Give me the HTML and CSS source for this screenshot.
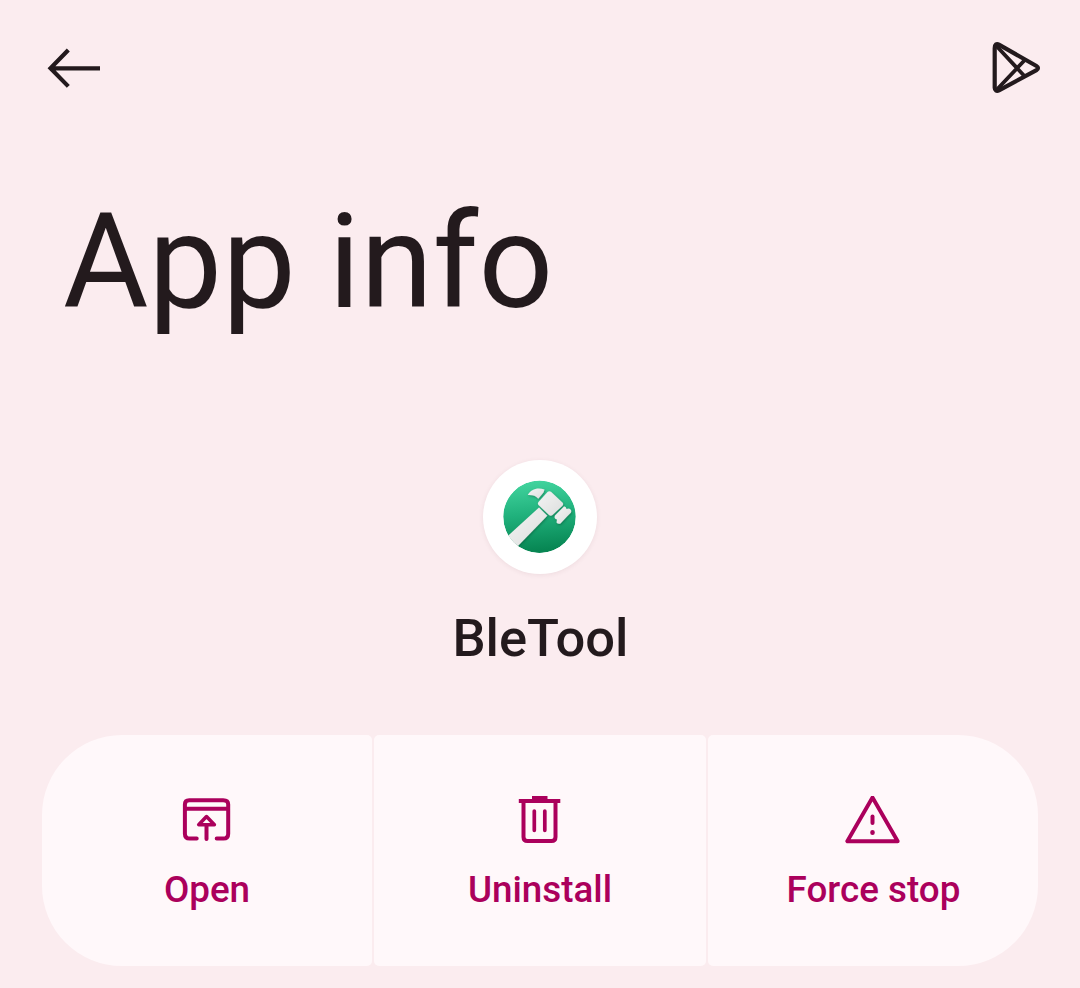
FILE: index.html
```html
<!DOCTYPE html>
<html lang="en">
<head>
<meta charset="utf-8">
<title>App info</title>
<link rel="stylesheet" href="styles.css">
</head>
<body>
<main class="screen">
  <header class="toolbar">
    <svg class="back" width="54" height="42" viewBox="0 0 54 42"><path d="M21.3 3 3.5 21.200 21.3 39.400M3.5 21.4H53" fill="none" stroke="currentColor" stroke-width="4.200"/></svg>
    <svg class="store" width="52" height="56" viewBox="0 0 52 56" fill="none" stroke="currentColor" stroke-width="4.200" stroke-linejoin="round"><path d="M3.700 8.200v39.600c0 2.600 1.900 3.900 4.200 2.600L45.500 30.200c2-1.100 2-3.100 0-4.200L7.900 4.600C5.600 3.300 3.700 4.500 3.700 8.200Z"/><path d="M5 5.500 34.300 37M5 50.500 34.300 19.500" stroke-width="3.800"/></svg>
  </header>
  <h1 class="title">App info</h1>
  <section class="app">
    <div class="app-icon">
      <svg width="74" height="74" viewBox="0 0 74 74">
        <defs>
          <linearGradient id="green" x1="0" y1="0" x2=".1" y2="1"><stop offset="0" stop-color="#45d7a1"/><stop offset=".5" stop-color="#20b17c"/><stop offset="1" stop-color="#078653"/></linearGradient>
          <linearGradient id="metal" x1="0" y1="0" x2="1" y2="1"><stop offset="0" stop-color="#f4f4f4"/><stop offset="1" stop-color="#dcdedd"/></linearGradient>
          <clipPath id="disc"><circle cx="36.500" cy="36.800" r="36.300"/></clipPath>
          <filter id="shade" x="-20%" y="-20%" width="150%" height="150%"><feDropShadow dx=".8" dy="1.200" stdDeviation=".8" flood-color="#064d31" flood-opacity=".5"/></filter>
        </defs>
        <g clip-path="url(#disc)">
          <circle cx="36.500" cy="36.800" r="36.300" fill="url(#green)"/>
          <g fill="url(#metal)" filter="url(#shade)">
            <path d="M36 27.500 44.300 35.800 13 68 2 58.500Z"/>
            <path d="M24.800 15C28 9 34.500 7 41.500 9.500L40.500 12.500 35.300 18.800C32.500 15.600 29.500 14.700 24.800 15Z"/>
            <path d="M44.500 12Q46 10.500 48 11.700L59.700 22.800Q60.700 24.200 59.500 25.700L49.500 35Q47.700 36.500 46 35L35.500 25Q34.300 23.500 35.500 22Z"/>
            <path d="M61 26.500Q63 26 63.500 29L66 28.500Q69 29.500 68 32.500L64.500 36 57.500 43.500Q55 44.500 53.500 42.500L54 39.500Q50.500 38.500 52 35.500Z"/>
          </g>
        </g>
      </svg>
    </div>
    <h2 class="app-name">BleTool</h2>
  </section>
  <nav class="actions">
    <button class="action">
      <svg width="56" height="52" viewBox="0 0 56 52" fill="none" stroke="currentColor" stroke-width="4" stroke-linecap="round"><path d="M17.700 42.500H10.700Q5.900 42.500 5.900 37.700V8.500Q5.900 4.200 10.200 4.200H44.200Q49.200 4.200 49.200 8.500V37.700Q49.200 42.500 44.400 42.500H37.700M6.200 12.800H49.200M27.500 43V29"/><path d="M27.500 20.500 19.700 28.800H35.400Z" stroke-linejoin="round" stroke-width="3.500"/></svg>
      <span>Open</span>
    </button>
    <button class="action">
      <svg width="56" height="52" viewBox="0 0 56 52" fill="none" stroke="currentColor" stroke-width="4"><path d="M6.800 5H48.300M20 2H35.500"/><path d="M11.500 5V41Q11.500 45 15.500 45H39.500Q43.500 45 43.500 41V5"/><path d="M22.300 15V34.300M32.800 15V34.300" stroke-linecap="round" stroke-width="3.700"/></svg>
      <span>Uninstall</span>
    </button>
    <button class="action">
      <svg width="56" height="52" viewBox="0 0 56 52" fill="none" stroke="currentColor" stroke-width="3.900" stroke-linecap="round" stroke-linejoin="round"><path d="M27.500 1.500 2.300 45.200H52.700Z"/><path d="M27.500 20.500V27" stroke-width="4"/><path d="M27.500 36.200V36.700" stroke-width="4.500"/></svg>
      <span>Force stop</span>
    </button>
  </nav>
</main>
</body>
</html>
```
FILE: styles.css
```css
* { box-sizing: border-box; }
body { margin: 0; background: #fbecef; color: #231a1d; font-family: Roboto, sans-serif; }
.screen { width: 1080px; height: 988px; padding: 0 42px; overflow: hidden; }
.toolbar { display: flex; justify-content: space-between; height: 136px; padding: 40px 0 0 5px; }
.toolbar svg { display: block; }
.back { margin-top: 7px; }
.store { margin-right: -5px; }
.title { margin: 49px 0 0 21px; font-size: 131px; line-height: 154px; font-weight: 400; letter-spacing: .1px; white-space: nowrap; }
.app { display: flex; flex-direction: column; align-items: center; margin-top: 121px; }
.app-icon { display: flex; align-items: center; justify-content: center; width: 114px; height: 114px; border-radius: 50%; background: #fff; box-shadow: 0 1px 5px rgba(90, 40, 55, .08); }
.app-name { margin: 33px 0 0 1px; font-size: 52.500px; line-height: 62px; font-weight: 500; }
.actions { display: grid; grid-template-columns: 330px 332px 330px; gap: 2px; margin-top: 66px; height: 231px; }
.action { display: flex; flex-direction: column; align-items: center; border: 0; border-radius: 5px; padding: 61px 0 0; background: #fff8fa; color: #ab005c; font: 500 36.800px/44px Roboto, sans-serif; }
.action:first-child { border-radius: 80px 5px 5px 80px; }
.action:last-child { border-radius: 5px 80px 80px 5px; }
.action span { margin-top: 20px; }
.action:last-child span { margin-left: 1px; }
```
